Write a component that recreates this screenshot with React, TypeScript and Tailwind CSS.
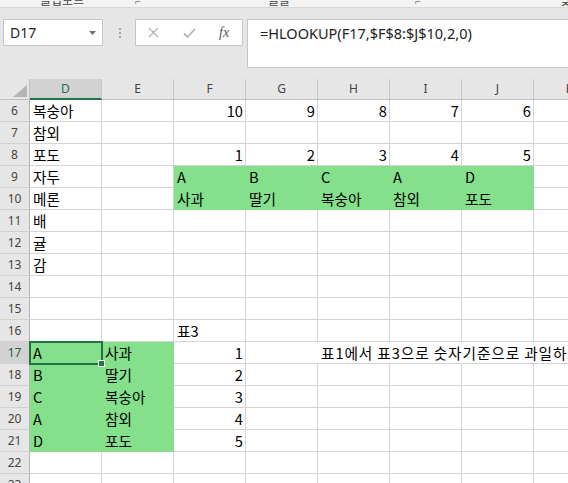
import clsx from "clsx";

type Cell = { v?: string; num?: boolean; green?: boolean };

const COLS = ["D", "E", "F", "G", "H", "I", "J", "K"];

// one entry per column D..K
const DATA: Record<number, Cell[]> = {
  6: [{ v: "복숭아" }, {}, { v: "10", num: true }, { v: "9", num: true }, { v: "8", num: true }, { v: "7", num: true }, { v: "6", num: true }, {}],
  7: [{ v: "참외" }],
  8: [{ v: "포도" }, {}, { v: "1", num: true }, { v: "2", num: true }, { v: "3", num: true }, { v: "4", num: true }, { v: "5", num: true }, {}],
  9: [{ v: "자두" }, {}, { v: "A", green: true }, { v: "B", green: true }, { v: "C", green: true }, { v: "A", green: true }, { v: "D", green: true }, {}],
  10: [{ v: "메론" }, {}, { v: "사과", green: true }, { v: "딸기", green: true }, { v: "복숭아", green: true }, { v: "참외", green: true }, { v: "포도", green: true }, {}],
  11: [{ v: "배" }],
  12: [{ v: "귤" }],
  13: [{ v: "감" }],
  16: [{}, {}, { v: "표3" }],
  17: [{ v: "A", green: true }, { v: "사과", green: true }, { v: "1", num: true }],
  18: [{ v: "B", green: true }, { v: "딸기", green: true }, { v: "2", num: true }],
  19: [{ v: "C", green: true }, { v: "복숭아", green: true }, { v: "3", num: true }],
  20: [{ v: "A", green: true }, { v: "참외", green: true }, { v: "4", num: true }],
  21: [{ v: "D", green: true }, { v: "포도", green: true }, { v: "5", num: true }],
};

const ROWS = Array.from({ length: 18 }, (_, i) => i + 6);

function RibbonEdge() {
  return (
    <div className="flex h-[8px] overflow-hidden border-b border-[#d8d8d8] bg-[#f3f3f3] text-[12px] leading-[12px] text-[#444]">
      <span className="-mt-[6px] ml-[40px] w-[95px] shrink-0">클립보드</span>
      <span className="-mt-[5px] w-[133px] shrink-0 text-[10px] text-[#777]">⌐</span>
      <span className="-mt-[6px] w-[147px] shrink-0">글꼴</span>
      <span className="-mt-[5px] w-[145px] shrink-0 text-[10px] text-[#777]">⌐</span>
      <span className="-mt-[6px] shrink-0">맞춤</span>
    </div>
  );
}

function FormulaBar() {
  return (
    <div className="flex h-[71px] items-start bg-[#e6e6e6] pt-[11px] font-['Noto_Sans',sans-serif]">
      <div className="ml-[3px] flex h-[27px] w-[100px] shrink-0 items-center justify-between border border-[#c6c6c6] bg-white pl-[6px] pr-[6px] text-[14px] text-[#222]">
        <span>D17</span>
        <svg width="7" height="4" viewBox="0 0 7 4">
          <path d="M0 0h7L3.5 4z" fill="#707070" />
        </svg>
      </div>
      <div className="ml-[15px] flex h-[27px] w-[3px] shrink-0 flex-col items-center justify-center gap-[2px]">
        <span className="h-[2px] w-[2px] bg-[#a8a8a8]" />
        <span className="h-[2px] w-[2px] bg-[#a8a8a8]" />
        <span className="h-[2px] w-[2px] bg-[#a8a8a8]" />
      </div>
      <div className="ml-[14px] flex h-[27px] w-[108px] shrink-0 items-center border border-[#c6c6c6] bg-white">
        <svg className="ml-[12px]" width="11" height="11" viewBox="0 0 11 11">
          <path d="M1 1l9 9M10 1l-9 9" stroke="#b4b4b4" strokeWidth="1.3" />
        </svg>
        <svg className="ml-[24px]" width="13" height="10" viewBox="0 0 13 10">
          <path d="M1 5.5l3.5 3.5L12 1" stroke="#b4b4b4" strokeWidth="1.8" fill="none" />
        </svg>
        <span className="ml-[23px] font-['Liberation_Serif',serif] text-[14px] italic leading-none text-[#555]">fx</span>
      </div>
      <div className="ml-[4px] h-[49px] flex-1 border border-r-0 border-[#c6c6c6] bg-white pl-[12px] pt-[3px] text-[14.5px] leading-[20px] text-[#222]">
        =HLOOKUP(F17,$F$8:$J$10,2,0)
      </div>
    </div>
  );
}

function HeaderRow() {
  return (
    <div className="flex h-[21px] bg-[#e6e6e6] font-['Noto_Sans',sans-serif] text-[12px] text-[#444]">
      <div className="flex w-[30px] shrink-0 items-start justify-end border-b border-r border-[#c0c0c0] pr-[2px] pt-[6px]">
        <svg width="14" height="12" viewBox="0 0 14 12">
          <path d="M14 0v12H0z" fill="#b4b4b4" />
        </svg>
      </div>
      {COLS.map((c) => (
        <div
          key={c}
          className={clsx(
            "flex w-[72px] shrink-0 items-center justify-center border-r border-[#c6c6c6]",
            c === "D" ? "border-b-2 border-b-[#217346] bg-[#d2d2d2] text-[#217346]" : "border-b border-b-[#c0c0c0]"
          )}
        >
          {c}
        </div>
      ))}
    </div>
  );
}

function SheetRow({ n }: { n: number }) {
  const cells = DATA[n] ?? [];
  const selected = n === 17;
  return (
    <div className={clsx("flex h-[22px]", selected && "relative z-10")}>
      <div
        className={clsx(
          "flex w-[30px] shrink-0 items-center justify-center border-b border-r border-b-[#d0d0d0] border-r-[#b4b4b4] font-['Noto_Sans',sans-serif] text-[12px]",
          selected ? "bg-[#d2d2d2] text-[#1d5e3a]" : "bg-[#e6e6e6] text-[#444]"
        )}
      >
        {n}
      </div>
      {COLS.map((col, i) => {
        const c = cells[i] ?? {};
        // row 17: the note runs over G..K, so those cells lose their right gridline
        const spill = selected && i >= 3;
        return (
          <div
            key={col}
            className={clsx(
              "relative flex w-[72px] shrink-0 items-center whitespace-nowrap border-b px-[3px] text-[14.67px]",
              !spill && "border-r",
              c.green ? "border-[#84e08b] bg-[#84e08b]" : "border-[#d4d4d4]",
              c.num ? "justify-end pr-[2px]" : "justify-start",
              selected && col === "D" && "z-10"
            )}
          >
            {c.v}
            {selected && col === "H" && <span className="tracking-[0.9px]">표1에서 표3으로 숫자기준으로 과일하고</span>}
            {selected && col === "D" && (
              <>
                <div className="pointer-events-none absolute -left-[1px] -top-[1px] h-[24px] w-[74px] border-2 border-[#217346]" />
                <div className="absolute left-[68px] top-[18px] h-[7px] w-[7px] border border-white bg-[#217346]" />
              </>
            )}
          </div>
        );
      })}
    </div>
  );
}

export default function App() {
  return (
    <div className="h-[483px] w-[568px] overflow-hidden bg-white font-['Noto_Sans_CJK_KR',sans-serif] text-black">
      <RibbonEdge />
      <FormulaBar />
      <HeaderRow />
      {ROWS.map((n) => (
        <SheetRow key={n} n={n} />
      ))}
    </div>
  );
}
